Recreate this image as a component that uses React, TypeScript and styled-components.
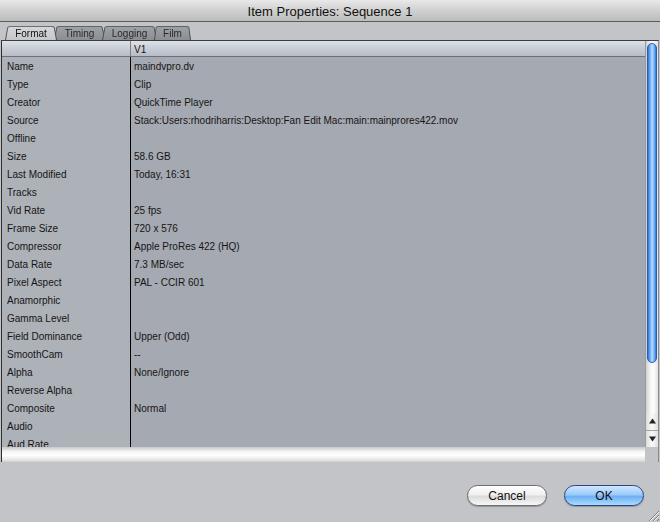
import React from "react";
import styled, { createGlobalStyle } from "styled-components";

const Global = createGlobalStyle`
  html, body { margin: 0; padding: 0; background: #c3c4c7; }
  body { font-family: "Liberation Sans", Arial, sans-serif; }
  * { box-sizing: border-box; }
`;

const Window = styled.div`
  width: 660px;
  height: 522px;
  display: flex;
  flex-direction: column;
  background: #c3c4c7;
  overflow: hidden;
  position: relative;
`;

const TitleBar = styled.div`
  height: 22px;
  flex: none;
  display: flex;
  align-items: center;
  justify-content: center;
  background: linear-gradient(#e9e9e9, #d2d2d2 45%, #bcbcbc);
  border-bottom: 1px solid #5a5a5a;
  font-size: 13px;
  color: #111;
  padding-top: 1px;
`;

const TabStrip = styled.div`
  height: 18px;
  flex: none;
  display: flex;
  align-items: flex-end;
  padding-left: 5px;
`;

const Tab = styled.div<{ $active?: boolean; $w: number }>`
  position: relative;
  width: ${(p) => p.$w}px;
  height: 16px;
  margin-right: -3px;
  display: flex;
  align-items: center;
  justify-content: center;
  font-size: 10px;
  color: ${(p) => (p.$active ? "#111" : "#2a2a2a")};
  z-index: ${(p) => (p.$active ? 3 : 1)};
  padding-top: 2px;
  &::before {
    content: "";
    position: absolute;
    inset: 0;
    border: 1px solid #4e4e4e;
    border-bottom: none;
    border-radius: 3px 3px 0 0;
    background: ${(p) =>
      p.$active
        ? "linear-gradient(#d6d7d9, #c6c7ca)"
        : "linear-gradient(#9ea1a6, #8b8e93)"};
    transform: perspective(30px) rotateX(12deg);
    transform-origin: bottom;
    z-index: -1;
  }
`;

const Content = styled.div`
  height: 422px;
  flex: none;
  display: flex;
  border-top: 1px solid #3e3e3e;
  margin-left: 1px;
  border-left: 1px solid #2e2e2e;
  border-right: 1px solid #8a8a8a;
  margin-right: 1px;
`;

const MainCol = styled.div`
  flex: 1;
  display: flex;
  flex-direction: column;
  min-width: 0;
`;

const Table = styled.div`
  flex: 1;
  overflow: hidden;
  background: linear-gradient(to right, #adb1b8 129px, #a5a9b1 129px);
`;

const Row = styled.div<{ $header?: boolean }>`
  display: grid;
  grid-template-columns: 129px 1fr;
  height: ${(p) => (p.$header ? "16px" : "18px")};
  font-size: 10px;
  color: #151515;
  ${(p) =>
    p.$header &&
    `background: linear-gradient(#dde1e8, #c9ced6 50%, #b7bcc5);
     border-bottom: 1px solid #6b6f77;`}
`;

const Label = styled.div<{ $header?: boolean }>`
  border-right: 1px solid ${(p) => (p.$header ? "#7c8089" : "#000")};
  padding-left: 5px;
  display: flex;
  align-items: center;
  white-space: nowrap;
`;

const Value = styled.div`
  padding-left: 3px;
  display: flex;
  align-items: center;
  padding-top: 1px;
  white-space: nowrap;
`;

const HScroll = styled.div`
  height: 15px;
  flex: none;
  background: linear-gradient(#c8c8c8, #f4f4f4 30%, #ffffff 55%, #e6e6e6 85%, #cfcfcf);
`;

const VScroll = styled.div`
  width: 13px;
  flex: none;
  display: flex;
  flex-direction: column;
`;

const Track = styled.div`
  flex: 1;
  display: flex;
  flex-direction: column;
  background: linear-gradient(to right, #d0d0d0, #f4f4f4 35%, #ffffff 60%, #e2e2e2);
  border-left: 1px solid #9a9a9a;
  padding: 2px 1px 0 1px;
`;

const Thumb = styled.div`
  height: 320px;
  border-radius: 6px;
  border: 1px solid #2a5cb0;
  background: linear-gradient(to right, #2f71d8, #6aa8f4 25%, #b6dbff 50%, #7ab6f8 75%, #3276d8);
`;

const Arrows = styled.div`
  height: 34px;
  flex: none;
  display: flex;
  flex-direction: column;
  border-left: 1px solid #9a9a9a;
  background: linear-gradient(to right, #dcdcdc, #fafafa 50%, #e0e0e0);
`;

const ArrowBtn = styled.div<{ $top?: boolean }>`
  flex: 1;
  display: flex;
  align-items: center;
  justify-content: center;
  ${(p) => (p.$top ? "border-bottom: 1px solid #a6a6a6;" : "")}
`;

const Corner = styled.div`
  height: 15px;
  flex: none;
  background: #c3c4c7;
`;

const Footer = styled.div`
  flex: 1;
  display: flex;
  justify-content: flex-end;
  align-items: flex-start;
  padding: 23px 16px 0 0;
  gap: 17px;
`;

const Button = styled.div<{ $primary?: boolean }>`
  width: 80px;
  height: 21px;
  border-radius: 11px;
  display: flex;
  align-items: center;
  justify-content: center;
  font-size: 12px;
  color: #111;
  border: 1px solid ${(p) => (p.$primary ? "#30457e" : "#6e6e6e")};
  background: ${(p) =>
    p.$primary
      ? "linear-gradient(#cfe6ff, #9ccbfb 45%, #6fb0f4 55%, #a8dbff)"
      : "linear-gradient(#ffffff, #f0f0f0 45%, #dcdcdc 55%, #f7f7f7)"};
  box-shadow: 0 1px 1px rgba(0, 0, 0, 0.25);
`;

const Grip = styled.svg`
  position: absolute;
  right: 0;
  bottom: 0;
`;

const rows: [string, string][] = [
  ["Name", "maindvpro.dv"],
  ["Type", "Clip"],
  ["Creator", "QuickTime Player"],
  ["Source", "Stack:Users:rhodriharris:Desktop:Fan Edit Mac:main:mainprores422.mov"],
  ["Offline", ""],
  ["Size", "58.6 GB"],
  ["Last Modified", "Today, 16:31"],
  ["Tracks", ""],
  ["Vid Rate", "25 fps"],
  ["Frame Size", "720 x 576"],
  ["Compressor", "Apple ProRes 422 (HQ)"],
  ["Data Rate", "7.3 MB/sec"],
  ["Pixel Aspect", "PAL - CCIR 601"],
  ["Anamorphic", ""],
  ["Gamma Level", ""],
  ["Field Dominance", "Upper (Odd)"],
  ["SmoothCam", "--"],
  ["Alpha", "None/Ignore"],
  ["Reverse Alpha", ""],
  ["Composite", "Normal"],
  ["Audio", ""],
  ["Aud Rate", ""],
];

export default function App() {
  return (
    <Window>
      <Global />
      <TitleBar>Item Properties: Sequence 1</TitleBar>
      <TabStrip>
        <Tab $active $w={52}>Format</Tab>
        <Tab $w={51}>Timing</Tab>
        <Tab $w={55}>Logging</Tab>
        <Tab $w={37}>Film</Tab>
      </TabStrip>
      <Content>
        <MainCol>
          <Table>
            <Row $header>
              <Label $header />
              <Value>V1</Value>
            </Row>
            {rows.map(([l, v]) => (
              <Row key={l}>
                <Label>{l}</Label>
                <Value>{v}</Value>
              </Row>
            ))}
          </Table>
          <HScroll />
        </MainCol>
        <VScroll>
          <Track>
            <Thumb />
          </Track>
          <Arrows>
            <ArrowBtn $top>
              <svg width="7" height="6" viewBox="0 0 7 6">
                <path d="M3.5 0.5 L7 5.5 L0 5.5 Z" fill="#222" />
              </svg>
            </ArrowBtn>
            <ArrowBtn>
              <svg width="7" height="6" viewBox="0 0 7 6">
                <path d="M0 0.5 L7 0.5 L3.5 5.5 Z" fill="#222" />
              </svg>
            </ArrowBtn>
          </Arrows>
          <Corner />
        </VScroll>
      </Content>
      <Footer>
        <Button>Cancel</Button>
        <Button $primary>OK</Button>
      </Footer>
      <Grip width="14" height="14" viewBox="0 0 14 14">
        <path d="M13 3 L3 13 M13 7 L7 13 M13 11 L11 13" stroke="#7d7d7d" strokeWidth="1" />
        <path d="M13 4 L4 13 M13 8 L8 13" stroke="#f4f4f4" strokeWidth="1" />
      </Grip>
    </Window>
  );
}
